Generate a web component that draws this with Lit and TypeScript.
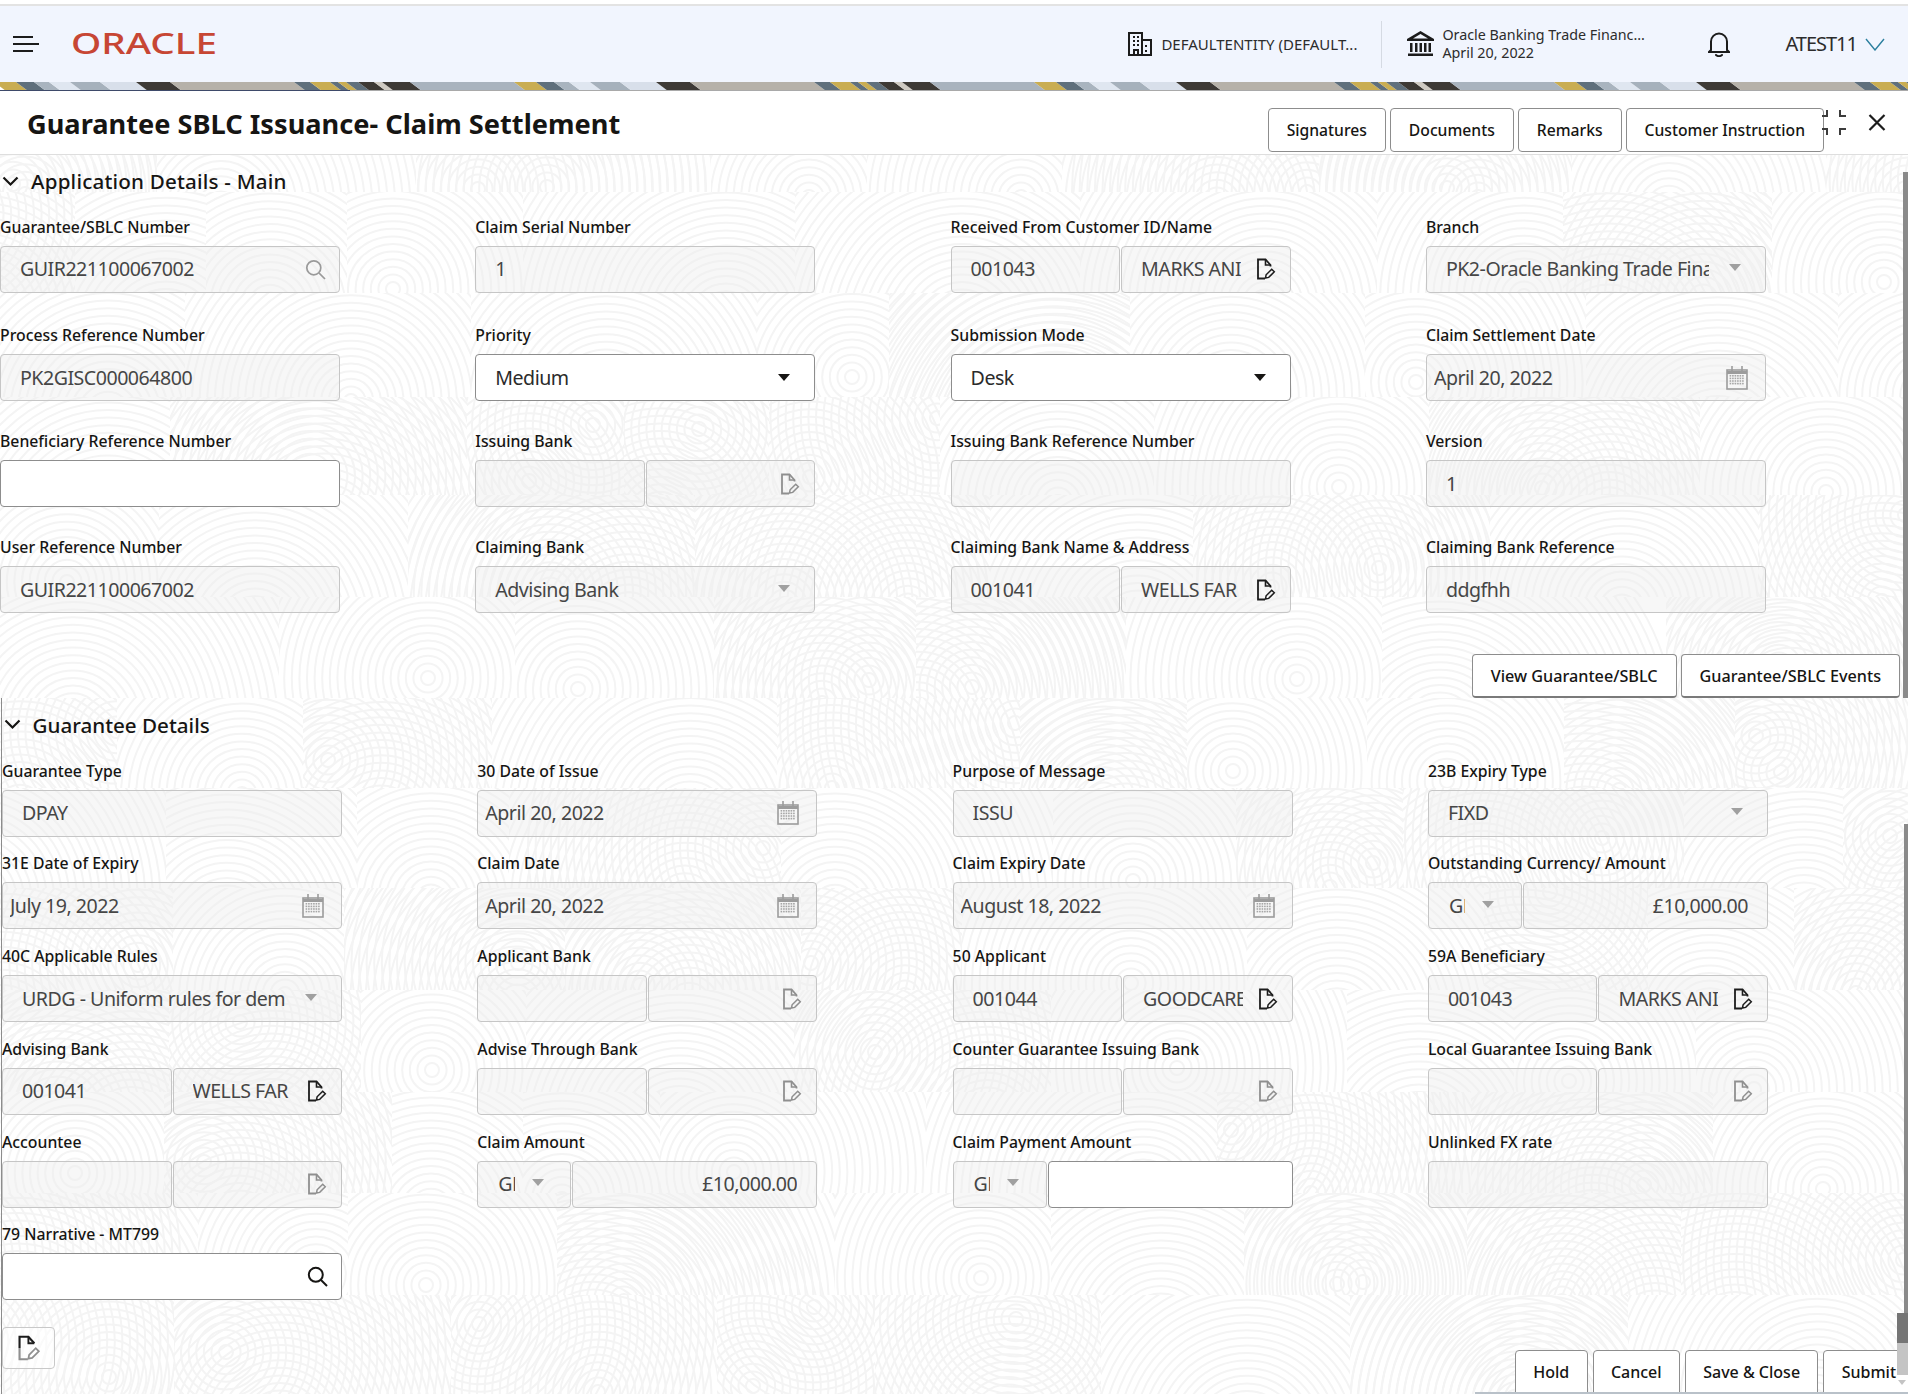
import { LitElement, html, css, svg, unsafeCSS } from "lit";
import { customElement } from "lit/decorators.js";

/* ---------- generated fingerprint background ---------- */
function fingerprint(): string {
  let seed = 17;
  const rnd = () => ((seed = (seed * 1103515245 + 12345) & 0x7fffffff) / 0x7fffffff);
  const rings: string[] = [];
  for (let r = 7; r <= 240; r += 7.6) rings.push(`<circle r="${r.toFixed(1)}"/>`);
  const bands = [0, 37, 138, 242, 340, 442, 543, 633, 733, 835, 937, 1038, 1140, 1239];
  let cells = "";
  for (let b = 0; b < bands.length - 1; b++) {
    const y = bands[b];
    const h = bands[b + 1] - y;
    let x = -Math.floor(rnd() * 80);
    while (x < 1908) {
      const w = 130 + Math.floor(rnd() * 170);
      const cx = Math.floor(w * (0.2 + rnd() * 0.6));
      const cy = h * (0.75 + rnd() * 0.7);
      let uses = `<use href="#f" x="${cx}" y="${cy.toFixed(0)}"/>`;
      if (rnd() > 0.55) uses += `<use href="#f" x="${Math.floor(rnd() * w)}" y="${(rnd() * h * 1.6).toFixed(0)}"/>`;
      cells += `<svg x="${x}" y="${y}" width="${w}" height="${h}">${uses}</svg>`;
      x += w;
    }
  }
  const s = `<svg xmlns="http://www.w3.org/2000/svg" width="1908" height="1239"><defs><g id="f" fill="none" stroke="#f4f4f4" stroke-width="2">${rings.join("")}</g></defs>${cells}</svg>`;
  return `data:image/svg+xml,${encodeURIComponent(s)}`;
}

/* ---------- top decorative strip ---------- */
const stripSegs: [number, number, string][] = [
  [0, 22, "#c9ad52"], [22, 40, "#5f6f7c"], [40, 55, "#a9b4bf"], [55, 76, "#dfe6f0"], [76, 106, "#a6b1bc"],
  [106, 142, "#d8dfea"], [142, 176, "#3d3935"], [176, 300, "#b6b1a9"], [300, 316, "#5f6f7c"], [316, 336, "#c9ad52"],
  [336, 344, "#5f6f7c"], [344, 352, "#c9ad52"], [352, 364, "#5f6f7c"], [364, 380, "#3d3935"], [380, 388, "#cfcac2"],
  [388, 416, "#3d3935"], [416, 520, "#a9b3be"],
];
const strip = () => {
  const polys = [];
  for (let k = 0; k < 4; k++)
    for (const [a, b, c] of stripSegs) {
      const o = k * 520;
      polys.push(svg`<polygon points="${a + o - 6},0 ${b + o - 6},0 ${b + o + 6},9 ${a + o + 6},9" fill="${c}"/>`);
    }
  return html`<svg class="strip" width="1908" height="8" viewBox="0 0 1908 8" preserveAspectRatio="none">${polys}</svg>`;
};

/* ---------- icons ---------- */
const docIcon = (dis: boolean) => html`<svg class="ic doc" width="20" height="22" viewBox="0 0 20 22" fill="none" stroke="${dis ? "#8f8f8f" : "#1c1c1c"}" stroke-width="1.8">
  <path d="M9 20.500H2V1.500h7.500l5 5.500v1.500"/><path d="M9.500 1.500V7h5" stroke-width="1.6"/>
  <path d="M9.500 20l.6-3.200 5.600-5.600 2.600 2.600-5.600 5.600z" stroke-width="1.5"/></svg>`;
const miniIcon = () => html`<svg width="24" height="26" viewBox="0 0 20 22" fill="none" stroke-width="1.8" style="display:block">
  <path d="M2 11V1.500h7.500l5 5.500" stroke="#1c1c1c"/><path d="M9.500 1.500V7h5" stroke="#1c1c1c" stroke-width="1.600"/>
  <path d="M2 11v9.500h7" stroke="#8f8f8f"/>
  <path d="M9.500 20l.6-3.200 5.600-5.600 2.600 2.600-5.600 5.600z" stroke="#8f8f8f" stroke-width="1.500"/></svg>`;
const searchIcon = (dark: boolean) => html`<svg class="ic srch" width="21" height="21" viewBox="0 0 21 21" fill="none" stroke="${dark ? "#161513" : "#9a9a9a"}" stroke-width="${dark ? 2 : 1.7}">
  <circle cx="8.800" cy="8.800" r="7"/><path d="M14 14l6 6"/></svg>`;
const calIcon = () => {
  const dots = [];
  for (let r = 0; r < 4; r++) for (let c = 0; c < 6; c++)
    dots.push(svg`<rect x="${3.6 + c * 2.5}" y="${9 + r * 2.6}" width="1.6" height="1.6"/>`);
  return html`<svg class="ic cal" width="22" height="24" viewBox="0 0 22 24" fill="none" stroke="#9c9c9c" stroke-width="1.6">
    <rect x="1" y="4" width="20" height="19"/><path d="M1 6.500h20" stroke-width="3"/><path d="M6 0v5M16 0v5"/>
    <g fill="#a6a6a6" stroke="none">${dots}</g></svg>`;
};
const caret = (dis: boolean) => html`<svg class="ic caret" width="12" height="7" viewBox="0 0 12 7"><path d="M0 0h12L6 7z" fill="${dis ? "#a0a0a0" : "#161513"}"/></svg>`;

/* ---------- form data ---------- */
type F =
  | { t: "in"; l: string; v?: string; on?: boolean; ic?: "s" | "sd" | "c" }
  | { t: "sel"; l: string; v: string; on?: boolean }
  | { t: "pair"; l: string; a?: string; b?: string; dark?: boolean }
  | { t: "cur"; l: string; v?: string; on?: boolean };

const sec1: F[] = [
  { t: "in", l: "Guarantee/SBLC Number", v: "GUIR221100067002", ic: "s" },
  { t: "in", l: "Claim Serial Number", v: "1" },
  { t: "pair", l: "Received From Customer ID/Name", a: "001043", b: "MARKS ANIMALS", dark: true },
  { t: "sel", l: "Branch", v: "PK2-Oracle Banking Trade Finance" },
  { t: "in", l: "Process Reference Number", v: "PK2GISC000064800" },
  { t: "sel", l: "Priority", v: "Medium", on: true },
  { t: "sel", l: "Submission Mode", v: "Desk", on: true },
  { t: "in", l: "Claim Settlement Date", v: "April 20, 2022", ic: "c" },
  { t: "in", l: "Beneficiary Reference Number", on: true },
  { t: "pair", l: "Issuing Bank" },
  { t: "in", l: "Issuing Bank Reference Number" },
  { t: "in", l: "Version", v: "1" },
  { t: "in", l: "User Reference Number", v: "GUIR221100067002" },
  { t: "sel", l: "Claiming Bank", v: "Advising Bank" },
  { t: "pair", l: "Claiming Bank Name & Address", a: "001041", b: "WELLS FAR", dark: true },
  { t: "in", l: "Claiming Bank Reference", v: "ddgfhh" },
];
const sec2: F[] = [
  { t: "in", l: "Guarantee Type", v: "DPAY" },
  { t: "in", l: "30 Date of Issue", v: "April 20, 2022", ic: "c" },
  { t: "in", l: "Purpose of Message", v: "ISSU" },
  { t: "sel", l: "23B Expiry Type", v: "FIXD" },
  { t: "in", l: "31E Date of Expiry", v: "July 19, 2022", ic: "c" },
  { t: "in", l: "Claim Date", v: "April 20, 2022", ic: "c" },
  { t: "in", l: "Claim Expiry Date", v: "August 18, 2022", ic: "c" },
  { t: "cur", l: "Outstanding Currency/ Amount", v: "£10,000.00" },
  { t: "sel", l: "40C Applicable Rules", v: "URDG - Uniform rules for demand guarantees" },
  { t: "pair", l: "Applicant Bank" },
  { t: "pair", l: "50 Applicant", a: "001044", b: "GOODCARE PLC", dark: true },
  { t: "pair", l: "59A Beneficiary", a: "001043", b: "MARKS ANIMALS", dark: true },
  { t: "pair", l: "Advising Bank", a: "001041", b: "WELLS FAR", dark: true },
  { t: "pair", l: "Advise Through Bank" },
  { t: "pair", l: "Counter Guarantee Issuing Bank" },
  { t: "pair", l: "Local Guarantee Issuing Bank" },
  { t: "pair", l: "Accountee" },
  { t: "cur", l: "Claim Amount", v: "£10,000.00" },
  { t: "cur", l: "Claim Payment Amount", on: true },
  { t: "in", l: "Unlinked FX rate" },
  { t: "in", l: "79 Narrative - MT799", on: true, ic: "sd" },
];

const field = (f: F) => {
  let body;
  if (f.t === "in") {
    const isDate = f.ic === "c";
    body = html`<div class="box ${f.on ? "on" : ""} ${isDate ? "date" : ""}">
      <span class="val">${f.v ?? ""}</span>
      ${f.ic === "s" ? searchIcon(false) : f.ic === "sd" ? searchIcon(true) : f.ic === "c" ? calIcon() : ""}
    </div>`;
  } else if (f.t === "sel") {
    body = html`<div class="box sel ${f.on ? "on" : ""}"><span class="val">${f.v}</span>${caret(!f.on)}</div>`;
  } else if (f.t === "pair") {
    body = html`<div class="duo">
      <div class="box"><span class="val">${f.a ?? ""}</span></div>
      <div class="box"><span class="val">${f.b ?? ""}</span>${docIcon(!f.dark)}</div>
    </div>`;
  } else {
    body = html`<div class="duo cur">
      <div class="box ccy"><span class="val">GBP</span>${caret(true)}</div>
      <div class="box amt ${f.on ? "on" : ""}"><span class="val">${f.v ?? ""}</span></div>
    </div>`;
  }
  return html`<div class="field"><div class="lbl">${f.l}</div>${body}</div>`;
};

@customElement("app-root")
export class AppRoot extends LitElement {
  static styles = css`
    :host {
      display: block; width: 1908px; height: 1394px; overflow: hidden; position: relative;
      background: #fff; color: #161513;
      font-family: "Noto Sans", "Open Sans", sans-serif;
    }
    .rule { height: 4px; background: #fff; border-bottom: 2px solid #e3e3e3; }
    .hdr { height: 76px; background: #f1f5fe; display: flex; align-items: center; }
    .burger { margin-left: 13px; width: 26px; display: block; }
    .logo { margin-left: 32px; display: block; overflow: visible; }
    .hspacer { flex: 1; }
    .ent { display: flex; align-items: center; gap: 9px; font-size: 15px; color: #2c2c2c; white-space: nowrap; width: 253px; padding-bottom: 1px; }
    .divider { width: 1px; height: 47px; background: #d5dae3; }
    .bank { display: flex; align-items: center; gap: 8px; margin-left: 25px; width: 301px; font-size: 14.3px; color: #2c2c2c; white-space: nowrap; }
    .bank .two { display: flex; flex-direction: column; gap: 0; line-height: 18.5px; }
    .bell { display: block; }
    .user { margin-left: 55px; font-size: 20px; color: #2c2c2c; white-space: nowrap; letter-spacing: -1px; padding-bottom: 1px; }
    .uchev { margin-left: 8px; margin-right: 23px; display: block; }
    .strip { display: block; }
    .stripline { height: 1px; background: linear-gradient(90deg, #3e4a6a 350px, #a9a9a9 350px); }

    .titlebar { display: flex; align-items: flex-start; border-bottom: 1px solid #dedede; box-sizing: border-box; height: 64px; position: relative; }
    h1 { margin: 14px 0 0 27px; font-size: 27.2px; line-height: 38px; font-weight: 700; flex: 1; white-space: nowrap; }
    .tbtns { display: flex; gap: 4px; margin-top: 17px; margin-right: 84px; }
    .btn {
      box-sizing: border-box; height: 44px; padding: 0 17.5px; background: #fff; border: 1px solid #8d8d8d; border-radius: 4px;
      font-size: 16px; font-weight: 500; line-height: 42px; color: #161513; white-space: nowrap; flex: none;
    }
    .tbtns .btn { font-size: 15.7px; padding: 0 18px; }
    .rz { position: absolute; left: 1822px; top: 19px; display: block; }
    .x { position: absolute; left: 1868px; top: 23px; display: block; }

    .content { height: 1239px; position: relative; overflow: hidden; background-image: url("${unsafeCSS(fingerprint())}"); background-repeat: no-repeat; }
    .sh { display: flex; align-items: center; font-size: 20.6px; font-weight: 500; white-space: nowrap; }
    .sh svg { display: block; flex: none; }
    .s1 .sh { height: 52px; margin-bottom: 7.5px; padding-left: 2px; gap: 12px; letter-spacing: 0.2px; }
    .s2 { margin-left: 1px; border-left: 1px solid #8c8c8c; height: 696px; }
    .s2 .sh { height: 54px; padding-left: 1.5px; gap: 12px; margin-bottom: 7px; }
    .grid { display: grid; grid-template-columns: repeat(4, 340px); column-gap: 135.3px; }
    .s1 .grid { grid-template-rows: 108.5px 106px 106px 78px; }
    .s2 .grid { grid-auto-rows: 92.8px; }
    .lbl { font-size: 15.8px; font-weight: 500; line-height: 24px; margin-bottom: 7px; white-space: nowrap; color: #161513; }
    .box {
      box-sizing: border-box; height: 47px; display: flex; align-items: center; padding: 0 19px;
      border: 1px solid #c6c6c6; border-radius: 4px; background: rgba(235, 235, 235, 0.42);
      font-size: 19.6px; letter-spacing: -0.5px; color: #464646; min-width: 0; flex: 1 1 0;
    }
    .box.on { background: #fff; border-color: #8d8d8d; color: #2b2b2b; }
    .box.date { padding-left: 7px; }
    .val { flex: 1; min-width: 0; overflow: hidden; white-space: nowrap; display: block; padding-bottom: 1px; }
    .ic { display: block; flex: none; margin-left: 10px; }
    .box .srch { margin-right: -6px; }
    .box .cal { margin-right: -2px; }
    .box:not(.on) .caret { margin-top: -3px; }
    .box .caret { margin-right: 5px; margin-left: 20px; }
    .duo { display: flex; gap: 1px; }
    .duo .box .doc { margin-left: auto; margin-right: -5px; }
    .duo .box:last-child .val { max-width: 100px; }
    .duo.cur .ccy { flex: 0 0 94px; padding: 0 0 0 20px; }
    .duo.cur .ccy .val { flex: 0 0 16.5px; }
    .duo.cur .ccy .caret { margin: -3px 0 0 17px; }
    .duo.cur .amt { padding-right: 19px; }
    .duo.cur .amt .val { text-align: right; max-width: none; }
    .actions { display: flex; justify-content: flex-end; gap: 4px; padding-right: 8px; margin-top: 40.5px; }
    .actions .btn { border-bottom-width: 2px; border-bottom-color: #7a7a7a; font-size: 16.2px; padding: 0 18px; }
    .mini {
      box-sizing: border-box; width: 53px; height: 42px; margin-top: 12px; display: flex; align-items: center; justify-content: center;
      border: 1px solid #c9c9c9; border-radius: 4px; background: rgba(255,255,255,.5);
    }
    .foot {
      position: absolute; left: 1475px; right: 0; bottom: 0; height: 44px; box-sizing: border-box;
      display: flex; gap: 5px; padding-left: 40px; border-bottom: 2px solid #b9c1c9; overflow: hidden;
    }
    .foot .btn { height: 46px; font-size: 16px; padding: 0 17.3px; }
    .bar { position: absolute; background: #8a8a8a; }
    .b1 { left: 1903px; top: 172px; width: 5px; height: 526px; }
    .b2 { left: 1904px; top: 824px; width: 4px; height: 489px; }
    .b3 { left: 1897px; top: 1313px; width: 11px; height: 30px; background: #757575; }
    .b4 { left: 1897px; top: 1343px; width: 11px; height: 32px; background: #c4c4c4; }
    .arr { position: absolute; left: 1898px; top: 1380px; width: 0; height: 0; border: 4.5px solid transparent; border-top: 5px solid #c4c4c4; border-bottom: 0; }
  `;

  render() {
    const chev = html`<svg width="17" height="11" viewBox="0 0 17 11" fill="none" stroke="#161513" stroke-width="2.200"><path d="M1.500 1.500l7 7 7-7"/></svg>`;
    return html`
      <div class="rule"></div>
      <header class="hdr">
        <svg class="burger" width="26" height="18" viewBox="0 0 26 18" fill="none" stroke="#1c1c1c" stroke-width="2.200"><path d="M0 2h20M0 9h26M0 16h20"/></svg>
        <svg class="logo" width="147" height="24" viewBox="0 0 147 24">
          <text x="0" y="21.500" textLength="146" lengthAdjust="spacingAndGlyphs" font-family="Noto Sans" font-size="29" font-weight="500" fill="#c74634">ORACLE</text>
        </svg>
        <div class="hspacer"></div>
        <div class="ent">
          <svg width="24" height="24" viewBox="0 0 24 24" fill="none" stroke="#1c1c1c" stroke-width="2"><path d="M1 23V1h13v22M14 8h9v15M0 23h24"/><path d="M5 5h2M9 5h2M5 9h2M9 9h2M5 13h2M9 13h2M18 13v2M18 18v2" stroke-width="2"/><path d="M6 23v-5h4v5"/></svg>
          <span>DEFAULTENTITY (DEFAULT...</span>
        </div>
        <div class="divider"></div>
        <div class="bank">
          <svg width="27" height="26" viewBox="0 0 27 26" fill="#1c1c1c"><path d="M13.500 0L27 8v2H0V8zM13.500 3L6 7.600h15z" fill-rule="evenodd"/><path d="M3 12h2.500v9H3zM8 12h2.500v9H8zM12.500 12H15v9h-2.500zM17 12h2.500v9H17zM21.500 12H24v9h-2.500zM1 22.500h25V25H1z"/></svg>
          <div class="two"><span>Oracle Banking Trade Financ...</span><span>April 20, 2022</span></div>
        </div>
        <svg class="bell" width="22" height="25" viewBox="0 0 22 25" fill="none" stroke="#1c1c1c" stroke-width="2"><path d="M3 18V9.500a8 8 0 0 1 16 0V18l2 2H1z"/><path d="M8 23c1.500 1.500 4.500 1.500 6 0" stroke-linecap="round"/></svg>
        <span class="user">ATEST11</span>
        <svg class="uchev" width="20" height="13" viewBox="0 0 20 13" fill="none" stroke="#2b7f9e" stroke-width="1.400"><path d="M1 1l9 11 9-11"/></svg>
      </header>
      ${strip()}
      <div class="stripline"></div>
      <div class="titlebar">
        <h1>Guarantee SBLC Issuance- Claim Settlement</h1>
        <div class="tbtns">
          <div class="btn">Signatures</div><div class="btn">Documents</div><div class="btn">Remarks</div><div class="btn">Customer Instruction</div>
        </div>
        <svg class="rz" width="25" height="25" viewBox="0 0 25 25" fill="none" stroke="#3c3c3c" stroke-width="2"><path d="M0 6h5V0M18 0v6h6M0 19h5v6M24 19h-6v6"/></svg>
        <svg class="x" width="18" height="17" viewBox="0 0 18 17" fill="none" stroke="#1c1c1c" stroke-width="2.200"><path d="M1.500 1l15 15M16.500 1l-15 15"/></svg>
      </div>
      <div class="content">
        <section class="s1">
          <div class="sh">${chev}<span>Application Details - Main</span></div>
          <div class="grid">${sec1.map(field)}</div>
          <div class="actions"><div class="btn">View Guarantee/SBLC</div><div class="btn">Guarantee/SBLC Events</div></div>
        </section>
        <section class="s2">
          <div class="sh">${chev}<span>Guarantee Details</span></div>
          <div class="grid">${sec2.map(field)}</div>
          <div class="mini">${miniIcon()}</div>
        </section>
        <div class="foot">
          <div class="btn">Hold</div><div class="btn">Cancel</div><div class="btn">Save &amp; Close</div><div class="btn">Submit</div>
        </div>
      </div>
      <div class="bar b1"></div><div class="bar b2"></div><div class="bar b3"></div><div class="bar b4"></div><div class="arr"></div>
    `;
  }
}
